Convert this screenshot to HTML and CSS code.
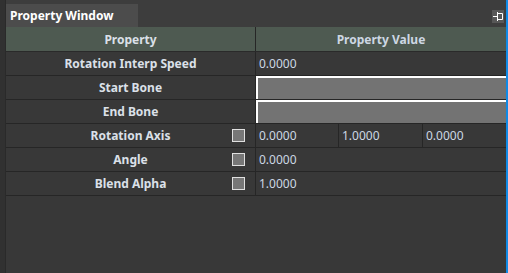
FILE: index.html
```html
<!DOCTYPE html>
<html>
<head>
<meta charset="utf-8">
<link rel="stylesheet" href="styles.css">
</head>
<body>
<div class="app">
  <div class="side"></div>
  <div class="main">
    <div class="topbar">
      <div class="tab">Property Window</div>
      <div class="pin">
        <svg width="12" height="13" viewBox="0 0 12 13">
          <path d="M1 6.5H5M5.5 2V11M5.5 3.5H10.5V9.5H5.5" fill="none" stroke="#fff" stroke-width="1"/>
        </svg>
      </div>
    </div>
    <div class="table">
      <div class="row head">
        <div class="lab">Property</div>
        <div class="val">Property Value</div>
      </div>
      <div class="row">
        <div class="lab"><span class="t">Rotation Interp Speed</span></div>
        <div class="val"><span class="num">0.0000</span></div>
      </div>
      <div class="row">
        <div class="lab"><span class="t">Start Bone</span></div>
        <div class="val"><div class="box"></div></div>
      </div>
      <div class="row">
        <div class="lab"><span class="t">End Bone</span></div>
        <div class="val"><div class="box"></div></div>
      </div>
      <div class="row">
        <div class="lab"><span></span><span class="t">Rotation Axis</span><span class="chk"></span></div>
        <div class="val triple"><span class="num">0.0000</span><span class="num">1.0000</span><span class="num">0.0000</span></div>
      </div>
      <div class="row">
        <div class="lab"><span></span><span class="t">Angle</span><span class="chk"></span></div>
        <div class="val"><span class="num">0.0000</span></div>
      </div>
      <div class="row">
        <div class="lab"><span></span><span class="t">Blend Alpha</span><span class="chk"></span></div>
        <div class="val"><span class="num">1.0000</span></div>
      </div>
    </div>
  </div>
  <div class="edge"></div>
</div>
</body>
</html>
```
FILE: styles.css
```css
* { box-sizing: border-box; }
html, body { margin: 0; padding: 0; }
body {
  width: 508px;
  height: 273px;
  overflow: hidden;
  background: #383838;
  font-family: "Noto Sans", "DejaVu Sans", sans-serif;
}
.app {
  display: flex;
  height: 273px;
}
.side {
  width: 6px;
  flex: none;
  background: #313131;
  border-right: 1px solid #2a2a2a;
}
.main {
  flex: 1;
  display: flex;
  flex-direction: column;
  background: #383838;
}
.edge {
  width: 2px;
  flex: none;
  background: #0f8ae6;
}
.topbar {
  height: 27px;
  background: #3d3d3d;
  display: flex;
  align-items: flex-end;
  justify-content: space-between;
}
.tab {
  width: 132px;
  height: 23px;
  background: #4c4c4c;
  color: #ffffff;
  font-weight: 700;
  font-size: 12px;
  line-height: 23px;
  padding-left: 4px;
}
.pin {
  width: 12px;
  height: 13px;
  background: #575757;
  margin-bottom: 4px;
  margin-right: 2px;
  display: flex;
}
.table {
  display: flex;
  flex-direction: column;
}
.row {
  display: grid;
  grid-template-columns: 250px 1fr;
  height: 24px;
  border-bottom: 1px solid #262626;
}
.row.head {
  height: 25px;
  background: #4e5a51;
  border-bottom: 1px solid #2a2a2a;
  color: #8e948f;
  font-weight: 700;
  font-size: 13px;
}
.row.head .lab, .row.head .val {
  justify-content: center;
  display: flex;
  align-items: center;
}
.lab {
  display: grid;
  grid-template-columns: 1fr auto 1fr;
  align-items: center;
  border-right: 1px solid #262626;
  color: #dbe0e8;
  font-weight: 700;
  font-size: 12px;
}
.lab .t { grid-column: 2; }
.chk {
  justify-self: end;
  width: 13px;
  height: 13px;
  background: #777777;
  border: 1px solid #e0e0e0;
  margin-right: 10px;
}
.val {
  display: flex;
  align-items: center;
  color: #cdd7e3;
  font-size: 12px;
}
.num { padding-left: 3px; }
.triple {
  display: grid;
  grid-template-columns: 83px 84px 1fr;
}
.triple .num {
  height: 100%;
  display: flex;
  align-items: center;
  border-right: 1px solid #262626;
}
.triple .num:last-child { border-right: none; }
.box {
  width: 100%;
  height: 100%;
  background: #737373;
  border-top: 2px solid #ffffff;
  border-left: 2px solid #ffffff;
}
```
